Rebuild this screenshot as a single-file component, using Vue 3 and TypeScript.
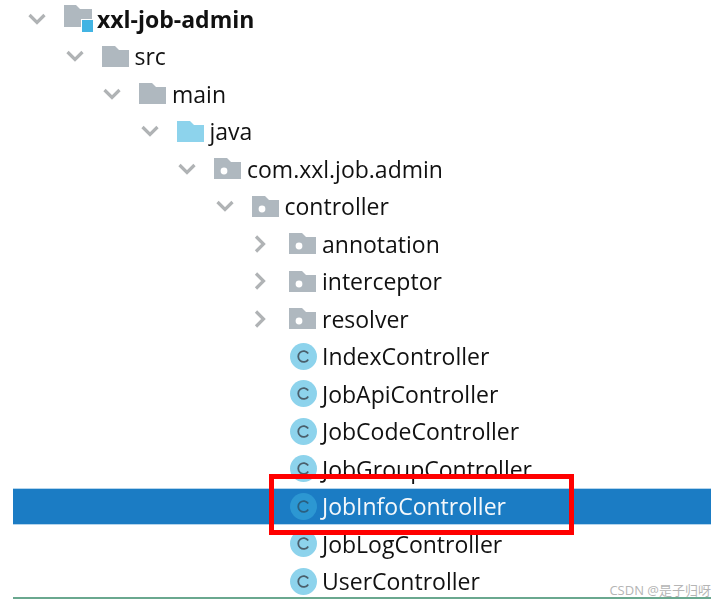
<script setup lang="ts">
type Kind = 'module' | 'folder' | 'source' | 'package' | 'class'

interface Row {
  label: string
  depth: number
  kind: Kind
  arrow?: 'open' | 'closed'
  selected?: boolean
}

const rows: Row[] = [
  { label: 'xxl-job-admin', depth: 0, kind: 'module', arrow: 'open' },
  { label: 'src', depth: 1, kind: 'folder', arrow: 'open' },
  { label: 'main', depth: 2, kind: 'folder', arrow: 'open' },
  { label: 'java', depth: 3, kind: 'source', arrow: 'open' },
  { label: 'com.xxl.job.admin', depth: 4, kind: 'package', arrow: 'open' },
  { label: 'controller', depth: 5, kind: 'package', arrow: 'open' },
  { label: 'annotation', depth: 6, kind: 'package', arrow: 'closed' },
  { label: 'interceptor', depth: 6, kind: 'package', arrow: 'closed' },
  { label: 'resolver', depth: 6, kind: 'package', arrow: 'closed' },
  { label: 'IndexController', depth: 6, kind: 'class' },
  { label: 'JobApiController', depth: 6, kind: 'class' },
  { label: 'JobCodeController', depth: 6, kind: 'class' },
  { label: 'JobGroupController', depth: 6, kind: 'class' },
  { label: 'JobInfoController', depth: 6, kind: 'class', selected: true },
  { label: 'JobLogController', depth: 6, kind: 'class' },
  { label: 'UserController', depth: 6, kind: 'class' },
]
</script>

<template>
  <div class="page">
    <div class="tree">
      <div
        v-for="row in rows"
        :key="row.label"
        class="row"
        :class="{ selected: row.selected }"
        :style="{ paddingLeft: 4 + row.depth * 37.5 + 'px' }"
      >
        <span class="arrow">
          <svg v-if="row.arrow === 'open'" width="18" height="12" viewBox="0 0 18 12">
            <path d="M1.5 2l7.5 7.5L16.5 2" fill="none" stroke="#b0b3b5" stroke-width="3.2" />
          </svg>
          <svg v-else-if="row.arrow === 'closed'" class="closed" width="12" height="18" viewBox="0 0 12 18">
            <path d="M2 1.5L9.5 9 2 16.5" fill="none" stroke="#b0b3b5" stroke-width="3.2" />
          </svg>
        </span>
        <span class="icon">
          <svg v-if="row.kind === 'class'" class="class-icon" width="27" height="27" viewBox="0 0 27 27">
            <circle cx="13.5" cy="13.5" r="13.5" :fill="row.selected ? '#2c97d2' : '#8dd3ec'" />
            <path
              d="M18.2 10.6a5.4 5.4 0 1 0 0 5.8"
              fill="none"
              :stroke="row.selected ? '#2a5f80' : '#4a5f6c'"
              stroke-width="1.8"
            />
          </svg>
          <svg v-else-if="row.kind === 'module'" width="30" height="28" viewBox="0 0 30 28">
            <path d="M0 0h12l4 4h12v18H0z" fill="#afb8bf" />
            <rect x="17" y="14" width="13" height="14" fill="#fff" />
            <rect x="18" y="15" width="11" height="12" fill="#42b4e3" />
          </svg>
          <svg v-else width="27" height="21" viewBox="0 0 27 21">
            <path d="M0 0h13l4 4h10v17H0z" :fill="row.kind === 'source' ? '#8dd3ec' : '#afb8bf'" />
            <circle v-if="row.kind === 'package'" cx="10" cy="13" r="3.4" fill="#fff" />
          </svg>
        </span>
        <span class="label" :class="{ bold: row.kind === 'module' }">{{ row.label }}</span>
      </div>
    </div>
    <div class="marker"></div>
    <div class="rule"></div>
    <span class="mark">CSDN @是子归呀</span>
  </div>
</template>

<style scoped>
.page {
  position: relative;
  width: 722px;
  height: 602px;
  overflow: hidden;
  background: #fff;
  font-family: "Open Sans", "Noto Sans CJK SC", sans-serif;
}

.tree {
  display: flex;
  flex-direction: column;
  width: 698px;
  margin-left: 13px;
}

.row {
  display: flex;
  align-items: center;
  height: 37.5px;
  font-size: 23px;
  color: #111;
}

.row.selected {
  background: #1b7cc4;
  box-shadow: inset 0 1px 0 #b4d4ec, inset 0 -1px 0 #b4d4ec;
  color: #f4f8fb;
}

.arrow {
  width: 40px;
  flex: none;
  display: flex;
  justify-content: center;
  margin-right: 7px;
}

.closed {
  margin-right: 5px;
}

.icon {
  width: 33px;
  flex: none;
  display: flex;
  align-items: center;
}

.class-icon {
  margin-left: 1px;
}

.label {
  white-space: nowrap;
  filter: blur(0.35px);
}

.bold {
  font-weight: 700;
}

.marker {
  position: absolute;
  left: 269px;
  top: 474px;
  width: 305px;
  height: 61px;
  box-sizing: border-box;
  border: 5px solid #f00;
}

.rule {
  position: absolute;
  left: 13px;
  top: 597px;
  width: 698px;
  height: 2px;
  background: #6aa88f;
}

.mark {
  position: absolute;
  right: 11px;
  bottom: 3px;
  font-size: 13px;
  color: #b5b5b5;
}
</style>
